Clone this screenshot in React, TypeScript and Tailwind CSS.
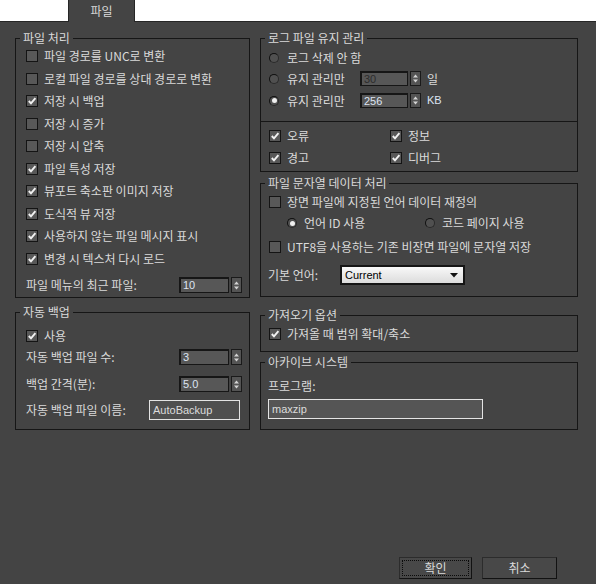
import type { ReactNode } from "react";

const fileItems: [string, boolean][] = [
  ["파일 경로를 UNC로 변환", false],
  ["로컬 파일 경로를 상대 경로로 변환", false],
  ["저장 시 백업", true],
  ["저장 시 증가", false],
  ["저장 시 압축", false],
  ["파일 특성 저장", true],
  ["뷰포트 축소판 이미지 저장", true],
  ["도식적 뷰 저장", true],
  ["사용하지 않는 파일 메시지 표시", true],
  ["변경 시 텍스처 다시 로드", true],
];

function Group({
  title,
  className,
  children,
}: {
  title: string;
  className?: string;
  children: ReactNode;
}) {
  return (
    <fieldset className={"border border-[#161616] " + (className ?? "")}>
      <legend className="ml-[4px] px-[3px] leading-[14px]">{title}</legend>
      {children}
    </fieldset>
  );
}

function Box({ checked }: { checked: boolean }) {
  return (
    <span className="w-[12px] h-[12px] shrink-0 border border-[#141414] bg-[#585858] flex items-center justify-center">
      {checked && (
        <svg width="10" height="10" viewBox="0 0 10 10">
          <path
            d="M1.8 5 L4 7.4 L8.4 2.2"
            fill="none"
            stroke="#f2f2f2"
            strokeWidth="1.9"
          />
        </svg>
      )}
    </span>
  );
}

function Check({ label, checked }: { label: ReactNode; checked: boolean }) {
  return (
    <div className="flex items-center gap-[6px] leading-[14px] whitespace-nowrap">
      <Box checked={checked} />
      <span>{label}</span>
    </div>
  );
}

function Radio({ on }: { on: boolean }) {
  return (
    <span className="w-[10px] h-[10px] shrink-0 rounded-full border border-[#101010] border-r-[#2a2a2a] border-b-[#2a2a2a] bg-[#505050] flex items-center justify-center">
      {on && <span className="w-[5px] h-[5px] rounded-full bg-[#f0f0f0]" />}
    </span>
  );
}

function Arrows({ h }: { h: string }) {
  return (
    <span
      className={
        "w-[11px] shrink-0 border border-[#1a1a1a] bg-[#545454] flex items-center justify-center " +
        h
      }
    >
      <svg width="7" height="11" viewBox="0 0 7 11">
        <path d="M3.5 1.5 L6 4.5 L1 4.5 Z" fill="#d4d4d4" />
        <path d="M3.5 9.5 L6 6.5 L1 6.5 Z" fill="#d4d4d4" />
      </svg>
    </span>
  );
}

function Spinner({
  value,
  w,
  h,
  dim,
}: {
  value: string;
  w: string;
  h: string;
  dim?: boolean;
}) {
  return (
    <div className="flex gap-[2px] shrink-0">
      <div
        className={
          "border-t-2 border-l-2 border-b border-r border-[#161616] bg-[#575757] pl-[2px] flex items-center font-['Liberation_Sans',sans-serif] text-[11px] " +
          w +
          " " +
          h +
          " " +
          (dim ? "text-[#2c2c2c]" : "text-[#dde4f2]")
        }
      >
        {value}
      </div>
      <Arrows h={h} />
    </div>
  );
}

function Button({ label, focus }: { label: string; focus?: boolean }) {
  return (
    <div
      className={
        "h-[22px] border border-[#2c2c2c] border-b-[#121212] border-r-[#121212] bg-[#484848] p-[2px] " +
        (focus ? "w-[73px]" : "w-[75px]")
      }
    >
      <div
        className={
          "h-full flex items-center justify-center border border-dotted " +
          (focus ? "border-[#0a0a0a]" : "border-transparent")
        }
      >
        {label}
      </div>
    </div>
  );
}

export default function App() {
  return (
    <div className="w-[596px] h-[584px] bg-[#444444] flex flex-col font-['Noto_Sans_CJK_KR',sans-serif] text-[12px] text-[#dadada] overflow-hidden">
      <div className="h-[22px] shrink-0 bg-white border-b border-[#262626] pl-[68px] flex">
        <div className="w-[67px] h-[22px] -mb-px bg-[#444444] border-x border-[#262626] flex items-center justify-center">
          파일
        </div>
      </div>

      <div className="flex gap-[10px] pl-[15px] pt-[9px]">
        {/* left column */}
        <div className="w-[235px] flex flex-col">
          <Group title="파일 처리">
            <div className="pl-[10px] pr-[7px] pb-[4px]">
              {fileItems.map(([label, checked]) => (
                <div key={label} className="h-[22.5px] flex items-center">
                  <Check
                    label={label}
                    checked={checked}
                  />
                </div>
              ))}
              <div className="mt-[7px] h-[16px] flex items-center">
                <span className="flex-1 leading-[14px]">파일 메뉴의 최근 파일:</span>
                <Spinner value="10" w="w-[50px]" h="h-[16px]" />
              </div>
            </div>
          </Group>

          <Group title="자동 백업" className="mt-[7px]">
            <div className="pl-[10px] pr-[7px] pt-[7px] pb-[9px]">
              <div className="h-[20px] flex items-center">
                <Check label="사용" checked />
              </div>
              <div className="mt-[3px] h-[16px] flex items-center">
                <span className="flex-1 leading-[14px]">자동 백업 파일 수:</span>
                <Spinner value="3" w="w-[50px]" h="h-[16px]" />
              </div>
              <div className="mt-[11px] h-[16px] flex items-center">
                <span className="flex-1 leading-[14px]">백업 간격(분):</span>
                <Spinner value="5.0" w="w-[50px]" h="h-[16px]" />
              </div>
              <div className="mt-[8px] h-[20px] flex items-center">
                <span className="flex-1 leading-[14px]">자동 백업 파일 이름:</span>
                <div className="w-[91px] h-[20px] mr-[2px] border border-[#e4e4e4] bg-[#4f4f4f] pl-[3px] flex items-center font-['Liberation_Sans',sans-serif] text-[11px] text-[#dcdcdc]">
                  AutoBackup
                </div>
              </div>
            </div>
          </Group>
        </div>

        {/* right column */}
        <div className="w-[318px] flex flex-col">
          <Group title="로그 파일 유지 관리">
            <div className="pl-[8px] pt-[3px]">
              <div className="h-[20px] flex items-center gap-[8px]">
                <Radio on={false} />
                <span className="leading-[14px]">로그 삭제 안 함</span>
              </div>
              <div className="h-[21px] flex items-center">
                <Radio on={false} />
                <span className="ml-[8px] w-[73px] leading-[14px]">유지 관리만</span>
                <Spinner value="30" w="w-[48px]" h="h-[15px]" dim />
                <span className="ml-[6px] leading-[14px]">일</span>
              </div>
              <div className="h-[23px] flex items-center">
                <Radio on />
                <span className="ml-[8px] w-[73px] leading-[14px]">유지 관리만</span>
                <Spinner value="256" w="w-[48px]" h="h-[15px]" />
                <span className="ml-[6px] font-['Liberation_Sans',sans-serif] text-[11px] text-[#dde4f2]">
                  KB
                </span>
              </div>
            </div>
            <div className="mt-[9px] border-t border-[#161616]" />
            <div className="pl-[8px] pt-[3px] pb-[2px] grid grid-cols-[121px_1fr]">
              <div className="h-[22px] flex items-center">
                <Check label="오류" checked />
              </div>
              <div className="h-[22px] flex items-center">
                <Check label="정보" checked />
              </div>
              <div className="h-[22px] flex items-center">
                <Check label="경고" checked />
              </div>
              <div className="h-[22px] flex items-center">
                <Check label="디버그" checked />
              </div>
            </div>
          </Group>

          <Group title="파일 문자열 데이터 처리" className="mt-[4px]">
            <div className="pl-[8px] pt-[1px] pb-[11px]">
              <div className="h-[22px] flex items-center">
                <Check label="장면 파일에 지정된 언어 데이터 재정의" checked={false} />
              </div>
              <div className="h-[20px] pl-[18px] grid grid-cols-[138px_1fr] items-center">
                <div className="flex items-center gap-[7px]">
                  <Radio on />
                  <span className="leading-[14px]">언어 ID 사용</span>
                </div>
                <div className="flex items-center gap-[7px]">
                  <Radio on={false} />
                  <span className="leading-[14px]">코드 페이지 사용</span>
                </div>
              </div>
              <div className="mt-[3px] h-[22px] flex items-center">
                <Check
                  label="UTF8을 사용하는 기존 비장면 파일에 문자열 저장"
                  checked={false}
                />
              </div>
              <div className="mt-[7px] h-[20px] flex items-center -ml-[1px]">
                <span className="w-[72px] leading-[14px]">기본 언어:</span>
                <div className="w-[125px] h-[20px] border-2 border-[#151515] bg-gradient-to-b from-[#f8f8f8] to-[#dcdcdc] pl-[3px] pr-[5px] flex items-center justify-between font-['Liberation_Sans',sans-serif] text-[11px] text-black">
                  <span>Current</span>
                  <svg width="8" height="5" viewBox="0 0 8 5">
                    <path d="M0 0 L8 0 L4 4.5 Z" fill="#111" />
                  </svg>
                </div>
              </div>
            </div>
          </Group>

          <Group title="가져오기 옵션" className="mt-[11px]">
            <div className="pl-[8px] pt-[1px] pb-[6px]">
              <div className="h-[22px] flex items-center">
                <Check label="가져올 때 범위 확대/축소" checked />
              </div>
            </div>
          </Group>

          <Group title="아카이브 시스템" className="mt-[3px]">
            <div className="pl-[7px] pt-[7px] pb-[10px]">
              <div className="h-[20px] flex items-center leading-[14px]">프로그램:</div>
              <div className="mt-[3px] w-[215px] h-[20px] border border-[#e4e4e4] bg-[#555555] pl-[3px] flex items-center font-['Liberation_Sans',sans-serif] text-[11px] text-[#dcdcdc]">
                maxzip
              </div>
            </div>
          </Group>
        </div>
      </div>

      <div className="mt-auto flex justify-end gap-[10px] pr-[39px] pb-[5px]">
        <Button label="확인" focus />
        <Button label="취소" />
      </div>
    </div>
  );
}
